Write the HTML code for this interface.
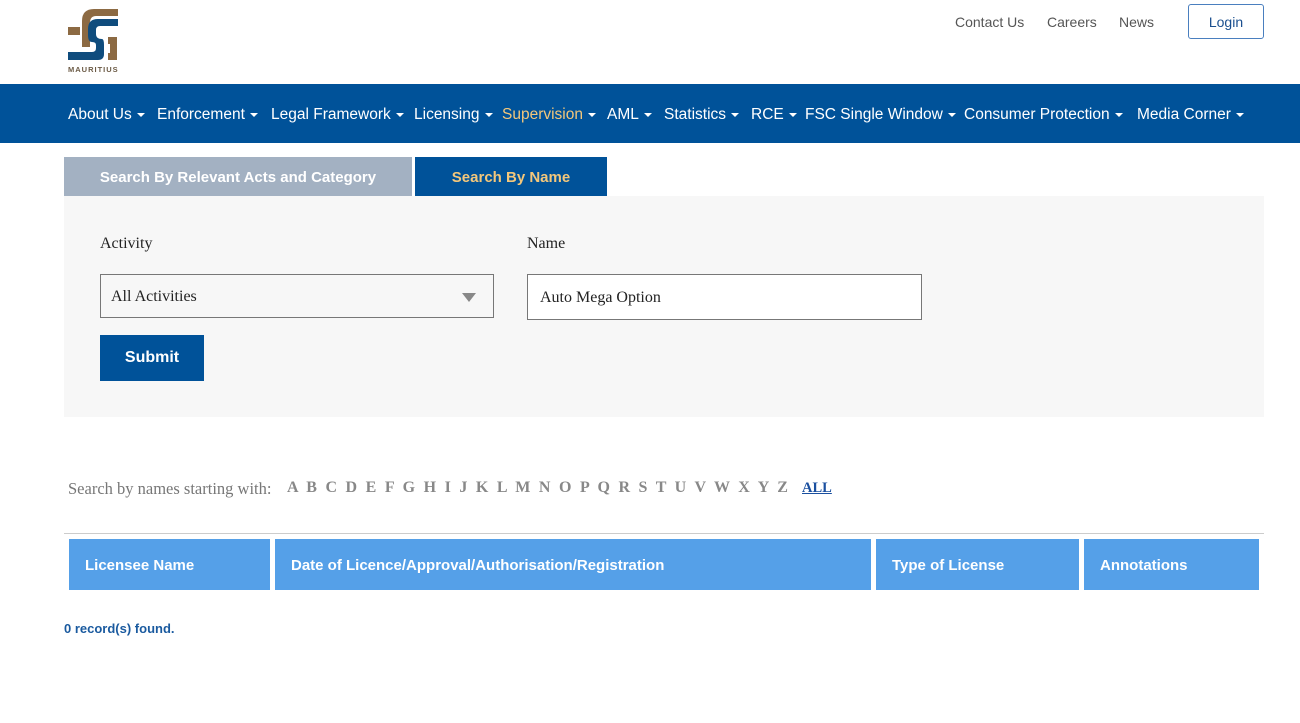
<!DOCTYPE html>
<html><head><meta charset="utf-8"><style>
*{margin:0;padding:0;box-sizing:border-box}
body{width:1300px;height:723px;background:#fff;font-family:"Liberation Sans",sans-serif;position:relative;overflow:hidden}
.a{position:absolute}
.top a{position:absolute;top:14px;font-size:14px;color:#555;text-decoration:none}
.login{position:absolute;left:1188px;top:4px;width:76px;height:35px;border:1px solid #4a7fbf;border-radius:3px;color:#1a4f8f;font-size:14px;text-align:center;line-height:35px}
.nav{position:absolute;left:0;top:84px;width:1300px;height:59px;background:#005299}
.nav span{position:absolute;top:22px;color:#fff;font-size:15.5px;white-space:nowrap}
.nav span:after{content:"";display:inline-block;margin-left:5px;vertical-align:middle;border-left:4px solid transparent;border-right:4px solid transparent;border-top:4px solid #fff}
.nav .s{color:#f3c77b}
.tab{position:absolute;top:157px;height:39px;font-weight:bold;font-size:15px;line-height:42px;text-align:center}
.panel{position:absolute;left:64px;top:196px;width:1200px;height:221px;background:#f7f7f7}
.serif{font-family:"Liberation Serif",serif}
.th{position:absolute;top:539px;height:51px;background:#55a0e8;color:#fff;font-weight:bold;font-size:15px;line-height:54px;padding-left:16px}
</style></head><body>
<svg class="a" style="left:66px;top:3px" width="56" height="62" viewBox="0 0 56 62">
<path d="M16 44 V18 Q16 6 28 6 H52 V13 H30 Q24 13 24 20 V44 Z" fill="#8c6a43"/>
<rect x="2" y="24" width="12" height="8" fill="#8c6a43"/>
<path d="M42 34 H51 V57 H42 V50 H44 V41 H42 Z" fill="#8c6a43"/>
<path d="M52 16 V23 H34 Q30 23 30 27 V31 Q30 36 36 36 Q38 36 38 42 V51 Q38 57 32 57 H2 V49 H26 Q30 49 30 45 V42 Q30 39 26 39 Q22 39 22 32 V26 Q22 16 32 16 Z" fill="#0f4c7d"/>
</svg>
<div class="a" style="left:68px;top:65px;font-size:7.5px;color:#6b5a45;font-weight:bold;letter-spacing:1px">MAURITIUS</div>
<div class="top"><a style="left:955px">Contact Us</a><a style="left:1047px">Careers</a><a style="left:1119px">News</a></div>
<div class="login">Login</div>
<div class="nav">
<span style="left:68px">About Us</span><span style="left:157px">Enforcement</span><span style="left:271px">Legal Framework</span><span style="left:414px">Licensing</span><span class="s" style="left:502px">Supervision</span><span style="left:607px">AML</span><span style="left:664px">Statistics</span><span style="left:751px">RCE</span><span style="left:805px">FSC Single Window</span><span style="left:964px">Consumer Protection</span><span style="left:1137px">Media Corner</span>
</div>
<div class="tab" style="left:64px;width:348px;background:#a3b1c2;color:#fff">Search By Relevant Acts and Category</div>
<div class="tab" style="left:415px;width:192px;background:#005299;color:#f3c77b">Search By Name</div>
<div class="panel"></div>
<div class="a serif" style="left:100px;top:235px;font-size:16px;color:#222">Activity</div>
<div class="a serif" style="left:527px;top:235px;font-size:16px;color:#222">Name</div>
<div class="a serif" style="left:100px;top:274px;width:394px;height:44px;border:1px solid #777;background:#f7f7f7;font-size:16px;padding:13px 10px;color:#222">All Activities
<div class="a" style="left:361px;top:18px;border-left:7px solid transparent;border-right:7px solid transparent;border-top:9px solid #888"></div></div>
<div class="a serif" style="left:527px;top:274px;width:395px;height:46px;border:1px solid #777;background:#fff;font-size:16px;padding:14px 12px;color:#222">Auto Mega Option</div>
<div class="a" style="left:100px;top:335px;width:104px;height:46px;background:#005299;color:#fff;font-weight:bold;font-size:16px;text-align:center;line-height:46px">Submit</div>
<div class="a serif" style="left:68px;top:479px;font-size:16.5px;color:#777;white-space:nowrap">Search by names starting with:</div>
<div class="a serif" style="left:287px;top:479px;font-size:16px;white-space:nowrap;font-weight:bold;color:#888;word-spacing:4.55px">A B C D E F G H I J K L M N O P Q R S T U V W X Y Z</div>
<div class="a serif" style="left:802px;top:480px;font-size:14.5px;font-weight:bold;color:#1a4f9f;text-decoration:underline">ALL</div>
<div class="a" style="left:64px;top:533px;width:1200px;height:1px;background:#ccc"></div>
<div class="th" style="left:69px;width:201px">Licensee Name</div>
<div class="th" style="left:275px;width:596px">Date of Licence/Approval/Authorisation/Registration</div>
<div class="th" style="left:876px;width:203px">Type of License</div>
<div class="th" style="left:1084px;width:175px">Annotations</div>
<div class="a" style="left:64px;top:621px;font-size:13px;font-weight:bold;color:#1a5a9f">0 record(s) found.</div>
</body></html>
